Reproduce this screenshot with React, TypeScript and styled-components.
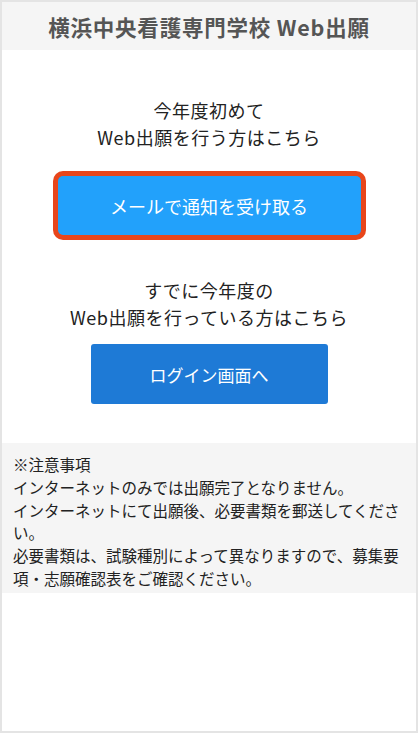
import React from "react";
import styled, { createGlobalStyle } from "styled-components";

const Global = createGlobalStyle`
  html, body { margin: 0; padding: 0; background: #fff; }
  body { font-family: "Noto Sans CJK JP", "Noto Sans", sans-serif; }
  * { box-sizing: border-box; }
`;

const Frame = styled.div`
  width: 418px;
  height: 733px;
  border: 2px solid #e4e4e4;
  background: #fff;
  display: flex;
  flex-direction: column;
`;

const Header = styled.header`
  height: 48px;
  background: #f5f5f5;
  display: flex;
  align-items: center;
  justify-content: center;
  font-size: 21.5px;
  font-weight: 700;
  color: #555;
  letter-spacing: 0.8px;
`;

const Section = styled.section<{ $top: number }>`
  display: flex;
  flex-direction: column;
  align-items: center;
  padding-top: ${(p) => p.$top}px;
`;

const Lead = styled.p`
  margin: 0;
  font-size: 18px;
  line-height: 27px;
  letter-spacing: 0.5px;
  color: #222;
  text-align: center;
`;

const Outline = styled.div`
  margin-top: 20px;
  padding: 5px;
  border-radius: 10px;
  background: #e8461b;
`;

const PrimaryButton = styled.button<{ $bg: string; $w: number; $h: number; $r: number; $fs: number }>`
  width: ${(p) => p.$w}px;
  height: ${(p) => p.$h}px;
  border: none;
  border-radius: ${(p) => p.$r}px;
  background: ${(p) => p.$bg};
  color: #fff;
  font-family: inherit;
  font-size: ${(p) => p.$fs}px;
  display: flex;
  align-items: center;
  justify-content: center;
  cursor: pointer;
`;

const LoginWrap = styled.div`
  margin-top: 13px;
`;

const Notes = styled.div`
  margin-top: 39px;
  background: #f5f5f5;
  padding: 10px 8px 3px 11px;
  font-size: 15.5px;
  line-height: 22.8px;
  color: #222;
`;

export default function App() {
  return (
    <>
      <Global />
      <Frame>
        <Header>横浜中央看護専門学校 Web出願</Header>
        <Section $top={47}>
          <Lead>
            今年度初めて
            <br />
            Web出願を行う方はこちら
          </Lead>
          <Outline>
            <PrimaryButton $bg="#22a1fb" $w={303} $h={59} $r={5} $fs={18}>
              メールで通知を受け取る
            </PrimaryButton>
          </Outline>
        </Section>
        <Section $top={37}>
          <Lead>
            すでに今年度の
            <br />
            Web出願を行っている方はこちら
          </Lead>
          <LoginWrap>
            <PrimaryButton $bg="#1e7ad6" $w={237} $h={60} $r={3} $fs={17}>
              ログイン画面へ
            </PrimaryButton>
          </LoginWrap>
        </Section>
        <Notes>
          ※注意事項
          <br />
          インターネットのみでは出願完了となりません。
          <br />
          インターネットにて出願後、必要書類を郵送してくださ
          <br />
          い。
          <br />
          必要書類は、試験種別によって異なりますので、募集要
          <br />
          項・志願確認表をご確認ください。
        </Notes>
      </Frame>
    </>
  );
}
